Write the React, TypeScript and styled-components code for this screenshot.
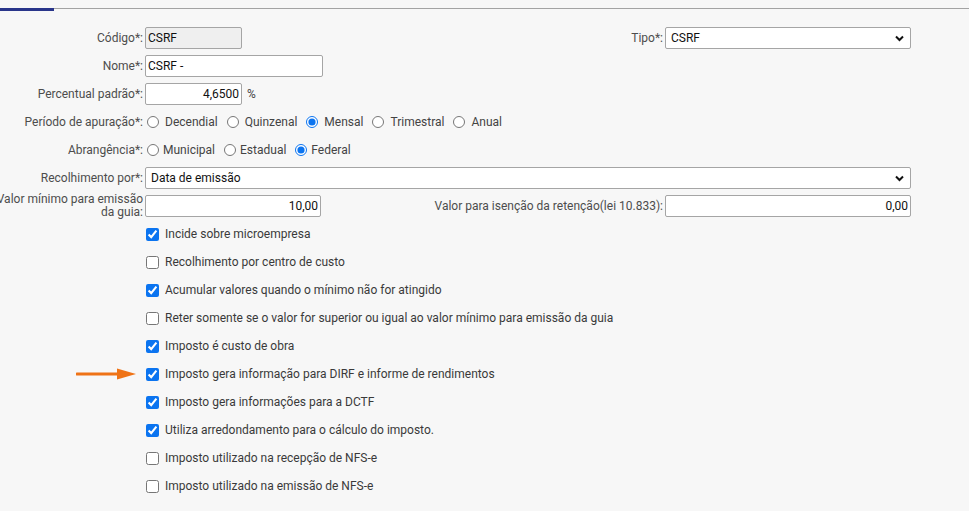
import React, {FC} from "react";
import styled, {createGlobalStyle} from "styled-components";

const GlobalStyle = createGlobalStyle`
  html, body {
    margin: 0;
    padding: 0;
    background: #f7f7f7;
    overflow: hidden;
  }
  body {
    font-family: Roboto, "Liberation Sans", Arial, sans-serif;
    font-size: 12px;
    color: #333;
  }
`;

const Page = styled.div`
  width: 969px;
  height: 511px;
  background: #f7f7f7;
`;

const TabStrip = styled.div`
  display: flex;
  margin-top: 8px;
  height: 3px;
`;

const ActiveTab = styled.div`
  width: 54px;
  background: #29358a;
`;

const TabRest = styled.div`
  flex: 1;
  border-top: 1px solid #a3a3a3;
`;

const Form = styled.div`
  padding: 13px 58px 0 0;
`;

const Row = styled.div`
  display: flex;
  align-items: center;
  height: 28px;
`;

const Label = styled.label<{ $width?: number }>`
  display: flex;
  flex-direction: column;
  align-items: flex-end;
  justify-content: center;
  width: ${p => p.$width ?? 143}px;
  flex: ${p => (p.$width ? "none" : "1")};
  padding-right: 2px;
  color: #4d4d4d;
  line-height: 13px;
  span {
    white-space: nowrap;
  }
`;

const TextInput = styled.input<{ $width: number; $right?: boolean; $readOnly?: boolean }>`
  box-sizing: border-box;
  width: ${p => p.$width}px;
  height: 22px;
  margin: 0;
  padding: 0 2px;
  border: 1px solid #a5a5a5;
  border-radius: 2px;
  background: ${p => (p.$readOnly ? "#efefef" : "#fff")};
  font-family: Roboto, "Liberation Sans", Arial, sans-serif;
  font-size: 12px;
  color: #111;
  text-align: ${p => (p.$right ? "right" : "left")};
  outline: none;
`;

const Suffix = styled.span`
  margin-left: 5px;
  color: #444;
`;

const SelectBox = styled.div<{ $width?: number }>`
  position: relative;
  box-sizing: border-box;
  width: ${p => (p.$width ? `${p.$width}px` : "auto")};
  flex: ${p => (p.$width ? "none" : "1")};
  height: 22px;
  border: 1px solid #a5a5a5;
  border-radius: 2px;
  background: #fff;
  display: flex;
  align-items: center;
  padding-left: 5px;
  color: #111;
`;

const Chevron = styled.svg`
  position: absolute;
  right: 6px;
  top: 7px;
`;

const RadioGroup = styled.div<{ $gap: number }>`
  display: flex;
  align-items: center;
  label {
    display: flex;
    align-items: center;
    gap: ${p => p.$gap}px;
    margin-right: 7px;
    color: #444;
  }
  input {
    margin: 0 0 0 2px;
    width: 12px;
    height: 12px;
    accent-color: #0b74f0;
  }
`;

const CheckList = styled.div`
  display: flex;
  flex-direction: column;
  padding-left: 146px;
`;

const CheckRow = styled.label`
  position: relative;
  display: flex;
  align-items: center;
  gap: 6px;
  height: 28px;
  color: #3a3a3a;
  input {
    margin: 0;
    width: 13px;
    height: 13px;
    accent-color: #0b74f0;
  }
`;

const Pointer = styled.svg`
  position: absolute;
  left: -70px;
  top: 8px;
`;

const ChevronIcon: FC = () => (
  <Chevron width="9" height="7" viewBox="0 0 9 7">
    <path d="M1 1.5 L4.5 5 L8 1.5" fill="none" stroke="#111" strokeWidth="2" />
  </Chevron>
);

interface CheckItem {
  text: string;
  checked: boolean;
  marked?: boolean;
}

const checks: CheckItem[] = [
  {text: "Incide sobre microempresa", checked: true},
  {text: "Recolhimento por centro de custo", checked: false},
  {text: "Acumular valores quando o mínimo não for atingido", checked: true},
  {text: "Reter somente se o valor for superior ou igual ao valor mínimo para emissão da guia", checked: false},
  {text: "Imposto é custo de obra", checked: true},
  {text: "Imposto gera informação para DIRF e informe de rendimentos", checked: true, marked: true},
  {text: "Imposto gera informações para a DCTF", checked: true},
  {text: "Utiliza arredondamento para o cálculo do imposto.", checked: true},
  {text: "Imposto utilizado na recepção de NFS-e", checked: false},
  {text: "Imposto utilizado na emissão de NFS-e", checked: false},
];

const periods = ["Decendial", "Quinzenal", "Mensal", "Trimestral", "Anual"];
const scopes = ["Municipal", "Estadual", "Federal"];

export default function App() {
  return (
    <Page>
      <GlobalStyle/>
      <TabStrip>
        <ActiveTab/>
        <TabRest/>
      </TabStrip>
      <Form>
        <Row>
          <Label $width={143}><span>Código*:</span></Label>
          <TextInput $width={97} $readOnly readOnly defaultValue="CSRF"/>
          <Label><span>Tipo*:</span></Label>
          <SelectBox $width={246}>CSRF<ChevronIcon/></SelectBox>
        </Row>
        <Row>
          <Label $width={143}><span>Nome*:</span></Label>
          <TextInput $width={178} defaultValue="CSRF -"/>
        </Row>
        <Row>
          <Label $width={143}><span>Percentual padrão*:</span></Label>
          <TextInput $width={97} $right defaultValue="4,6500"/>
          <Suffix>%</Suffix>
        </Row>
        <Row>
          <Label $width={143}><span>Período de apuração*:</span></Label>
          <RadioGroup $gap={6}>
            {periods.map(p => (
              <label key={p}>
                <input type="radio" name="periodo" defaultChecked={p === "Mensal"}/>
                {p}
              </label>
            ))}
          </RadioGroup>
        </Row>
        <Row>
          <Label $width={143}><span>Abrangência*:</span></Label>
          <RadioGroup $gap={4}>
            {scopes.map(s => (
              <label key={s}>
                <input type="radio" name="abrangencia" defaultChecked={s === "Federal"}/>
                {s}
              </label>
            ))}
          </RadioGroup>
        </Row>
        <Row>
          <Label $width={143}><span>Recolhimento por*:</span></Label>
          <SelectBox>Data de emissão<ChevronIcon/></SelectBox>
        </Row>
        <Row>
          <Label $width={143}><span>Valor mínimo para emissão</span><span>da guia:</span></Label>
          <TextInput $width={176} $right defaultValue="10,00"/>
          <Label><span>Valor para isenção da retenção(lei 10.833):</span></Label>
          <TextInput $width={246} $right defaultValue="0,00"/>
        </Row>
        <CheckList>
          {checks.map((c, index) => (
            <CheckRow key={index}>
              {c.marked && (
                <Pointer width="62" height="12" viewBox="0 0 62 12">
                  <path d="M1 6 H44" stroke="#ef7316" strokeWidth="3" strokeLinecap="round"/>
                  <path d="M41 0.5 L60 6 L41 11.5 Z" fill="#ef7316"/>
                </Pointer>
              )}
              <input type="checkbox" defaultChecked={c.checked}/>
              {c.text}
            </CheckRow>
          ))}
        </CheckList>
      </Form>
    </Page>
  );
}
